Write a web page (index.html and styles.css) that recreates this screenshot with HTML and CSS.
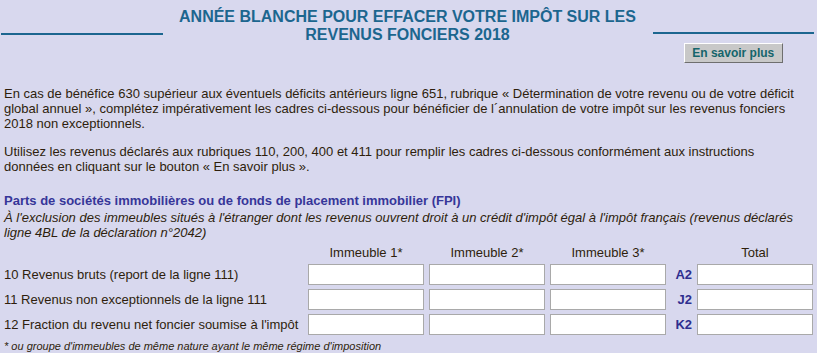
FILE: index.html
```html
<!DOCTYPE html>
<html lang="fr">
<head>
<meta charset="utf-8">
<title>Année blanche</title>
<link rel="stylesheet" href="styles.css">
</head>
<body>
<header class="banner">
  <div class="rule-cell"><div class="rule"></div></div>
  <h1 class="title">ANNÉE BLANCHE POUR EFFACER VOTRE IMPÔT SUR LES<br>REVENUS FONCIERS 2018</h1>
  <div class="rule-cell right">
    <div class="rule"></div>
    <button class="more" type="button">En savoir plus</button>
  </div>
</header>
<main class="content">
  <p class="text first">En cas de bénéfice 630 supérieur aux éventuels déficits antérieurs ligne 651, rubrique « Détermination de votre revenu ou de votre déficit global annuel », complétez impérativement les cadres ci-dessous pour bénéficier de l´annulation de votre impôt sur les revenus fonciers 2018 non exceptionnels.</p>
  <p class="text">Utilisez les revenus déclarés aux rubriques 110, 200, 400 et 411 pour remplir les cadres ci-dessous conformément aux instructions données en cliquant sur le bouton « En savoir plus ».</p>
  <h2 class="section-title">Parts de sociétés immobilières ou de fonds de placement immobilier (FPI)</h2>
  <p class="note">À l'exclusion des immeubles situés à l'étranger dont les revenus ouvrent droit à un crédit d'impôt égal à l'impôt français (revenus déclarés ligne 4BL de la déclaration n°2042)</p>
  <div class="grid">
    <span></span>
    <span class="head">Immeuble 1*</span>
    <span class="head">Immeuble 2*</span>
    <span class="head">Immeuble 3*</span>
    <span></span>
    <span class="head">Total</span>

    <span class="label">10 Revenus bruts (report de la ligne 111)</span>
    <input class="field" type="text">
    <input class="field" type="text">
    <input class="field" type="text">
    <span class="code">A2</span>
    <input class="field" type="text">

    <span class="label">11 Revenus non exceptionnels de la ligne 111</span>
    <input class="field" type="text">
    <input class="field" type="text">
    <input class="field" type="text">
    <span class="code">J2</span>
    <input class="field" type="text">

    <span class="label">12 Fraction du revenu net foncier soumise à l'impôt</span>
    <input class="field" type="text">
    <input class="field" type="text">
    <input class="field" type="text">
    <span class="code">K2</span>
    <input class="field" type="text">
  </div>
  <p class="footnote">* ou groupe d'immeubles de même nature ayant le même régime d'imposition</p>
</main>
</body>
</html>
```
FILE: styles.css
```css
html, body {
  margin: 0;
  padding: 0;
  background: #d8d8ee;
}
body {
  font-family: "Liberation Sans", Arial, sans-serif;
  font-size: 13px;
  color: #2e1e0c;
}
.banner {
  display: grid;
  grid-template-columns: 1fr 490px 1fr;
  padding: 8px 3px 0 1px;
}
.rule-cell {
  padding-top: 25px;
}
.rule-cell.right {
  padding-top: 24px;
}
.rule {
  height: 2px;
  background: #1c668f;
}
.title {
  margin: 0;
  font-size: 16px;
  font-weight: bold;
  line-height: normal;
  text-align: center;
  color: #1c668f;
}
.more {
  display: block;
  margin: 9px auto 0;
  width: 99px;
  height: 20px;
  padding: 0;
  background: #c8c8c8;
  border: 1px solid;
  border-color: #ffffff #6e6e6e #6e6e6e #ffffff;
  font-family: "Liberation Sans", Arial, sans-serif;
  font-size: 12px;
  font-weight: bold;
  color: #15656b;
}
.content {
  padding: 0 4px;
}
.text {
  margin: 13px 6px 0 0;
  line-height: normal;
}
.text.first {
  margin-top: 23px;
}
.section-title {
  margin: 19px 0 0;
  font-size: 13px;
  font-weight: bold;
  color: #363699;
  line-height: normal;
}
.note {
  margin: 2px 0 0;
  font-style: italic;
}
.grid {
  margin-top: 5px;
  display: grid;
  grid-template-columns: 1fr 116px 116px 116px 21px 116px;
  column-gap: 5px;
  row-gap: 4px;
  align-items: center;
}
.head {
  text-align: center;
}
.label {
  white-space: nowrap;
}
.field {
  box-sizing: border-box;
  width: 116px;
  height: 21px;
  margin: 0;
  padding: 0 2px;
  background: #ffffff;
  border: 1px solid #a9a9a9;
  font-family: "Liberation Sans", Arial, sans-serif;
  font-size: 13px;
}
.code {
  text-align: right;
  font-weight: bold;
  color: #2e2e8f;
}
.footnote {
  margin: 5px 0 0;
  font-size: 11px;
  font-style: italic;
}
```
